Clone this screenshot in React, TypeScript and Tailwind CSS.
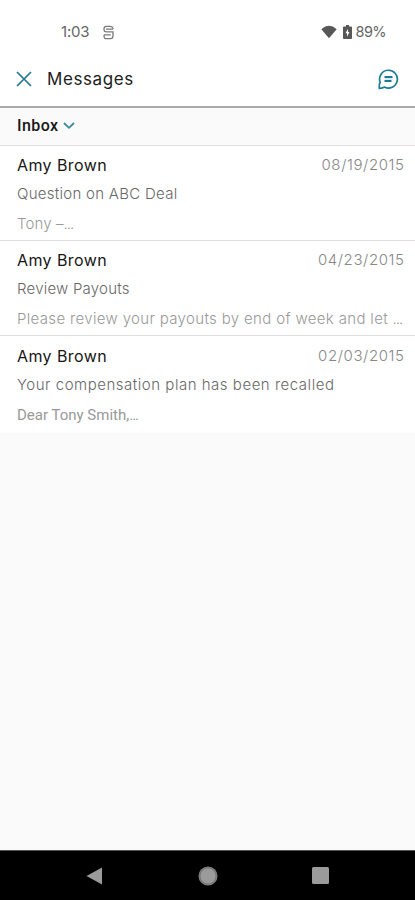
interface Message {
  sender: string;
  date: string;
  subject: string;
  subjectClass: string;
  preview: string;
  ending: string;
  previewClass: string;
}

const MESSAGES: Message[] = [
  {
    sender: 'Amy Brown',
    date: '08/19/2015',
    subject: 'Question on ABC Deal',
    subjectClass: 'tracking-[0.28px]',
    preview: 'Tony –',
    ending: '...',
    previewClass: 'mt-[6px] font-light tracking-[0.1px]',
  },
  {
    sender: 'Amy Brown',
    date: '04/23/2015',
    subject: 'Review Payouts',
    subjectClass: 'tracking-[0.22px]',
    preview: 'Please review your payouts by end of week and let ',
    ending: '...',
    previewClass: 'mt-[6px] font-light tracking-[0.34px]',
  },
  {
    sender: 'Amy Brown',
    date: '02/03/2015',
    subject: 'Your compensation plan has been recalled',
    subjectClass: 'tracking-[0.52px]',
    preview: 'Dear Tony Smith,',
    ending: '...',
    previewClass: "mt-[6px] font-['Roboto',sans-serif] tracking-[0px]",
  },
];

function StatusBar() {
  return (
    <div className="flex h-14 items-center pt-2 pl-[61px] pr-[29px] text-[#666]">
      <span className="text-[15px] leading-5 tracking-[-0.2px]">1:03</span>
      <svg className="ml-[14px]" width="11" height="15" viewBox="0 0 11 15" fill="none" stroke="#7a7a7a" strokeWidth="1.3">
        <path d="M10 4V3.5Q9.5 1.3 7.5 1.3H3.5Q1 1.3 1 4V4.5Q1 6.8 3.5 6.8H10V10.8Q10 13.7 7.5 13.7H3.5Q1 13.7 1 10.8V10" />
        <path d="M3 4.2H10M1 9.8H7.8" />
      </svg>
      <svg className="ml-auto" width="16" height="14" viewBox="0 0 16 14" fill="#575757">
        <path d="M0.3 4.2Q8 -2.7 15.7 4.2L8 13.2Z" />
      </svg>
      <svg className="ml-[6px]" width="9" height="14" viewBox="0 0 9 14" fill="#575757">
        <path d="M3 0H6V1.5H8Q9 1.5 9 2.5V13Q9 14 8 14H1Q0 14 0 13V2.5Q0 1.5 1 1.5H3Z" />
        <path d="M5 3.7L2.5 8.3H4V11.8L6.5 7.1H5Z" fill="#fff" />
      </svg>
      <span className="ml-1 text-[14.5px] leading-5 tracking-[-0.6px]">89%</span>
    </div>
  );
}

function Header() {
  return (
    <header className="flex h-[52px] items-center border-b-2 border-[#aaaaaa] pb-[4px] pl-4 pr-4">
      <svg width="16" height="16" viewBox="0 0 16 16" fill="none" stroke="#24788f" strokeWidth="1.7">
        <path d="M1 1L15 15M15 1L1 15" />
      </svg>
      <h1 className="ml-[15px] text-[17px] leading-6 tracking-[0.6px] text-[#202020]">Messages</h1>
      <svg className="ml-auto" width="21" height="21" viewBox="0 0 21 21" fill="none" stroke="#197c94">
        <path d="M1.3 19.5V15.5L2.2 13.4A8.9 8.9 0 1 1 6.3 18L4.5 18.9Z" strokeWidth="1.7" strokeLinejoin="round" />
        <path d="M6.5 8H14.5M6.5 12H13.5" strokeWidth="1.8" />
        <path d="M6.5 10H14.5" strokeWidth="0.6" opacity="0.5" />
      </svg>
    </header>
  );
}

function MessageRow({ message }: { message: Message }) {
  return (
    <li className="h-[95px] border-b border-[#dedede] bg-white pl-[17px] pr-[11px] pt-[7px] last:h-[97px] last:border-b-0 last:pt-2">
      <div className="flex items-center justify-between leading-6">
        <span className="text-[16px] tracking-[0.4px] text-[#161616]">{message.sender}</span>
        <span className="-mr-[0.6px] text-[15px] font-light tracking-[0.6px] text-[#888]">{message.date}</span>
      </div>
      <div className={`mt-[5px] text-[15px] font-light leading-6 text-[#686868] ${message.subjectClass}`}>
        {message.subject}
      </div>
      <div className={`whitespace-pre text-[15px] leading-6 text-[#999] ${message.previewClass}`}>
        {message.preview}
        <span className="tracking-[-1px]">{message.ending}</span>
      </div>
    </li>
  );
}

function NavigationBar() {
  return (
    <nav className="flex h-[50px] shrink-0 items-center border-t border-[#555] bg-black pl-[86px] text-[#9b9b9b]">
      <svg width="17" height="18" viewBox="0 0 17 18" fill="currentColor">
        <path d="M0.5 9L16 0.5V17.5Z" />
      </svg>
      <svg className="ml-[95px]" width="20" height="20" viewBox="0 0 20 20" fill="currentColor">
        <circle cx="10" cy="10" r="9.5" fill="#858585" />
        <circle cx="10" cy="10" r="8" stroke="#666" strokeWidth="0.7" />
      </svg>
      <div className="ml-[94px] size-[17px] rounded-[1.5px] bg-[#9b9b9b]" />
    </nav>
  );
}

export default function App() {
  return (
    <div className="flex h-[900px] w-[415px] flex-col overflow-hidden bg-[#fafafa] font-['Inter',sans-serif]">
      <div className="bg-white">
        <StatusBar />
        <Header />
      </div>
      <button className="flex h-[38px] shrink-0 items-center border-b border-[#dedede] bg-[#fafafa] pb-[2px] pl-[17px] text-left">
        <span className="font-['Roboto',sans-serif] text-[16px] font-medium leading-5 tracking-[0.4px] text-[#171717]">Inbox</span>
        <svg className="ml-[5px]" width="12" height="8" viewBox="0 0 12 8" fill="none" stroke="#3c899b" strokeWidth="1.8">
          <path d="M1 1L6 5.8L11 1" />
        </svg>
      </button>
      <ul className="flex-1">
        {MESSAGES.map((message) => (
          <MessageRow key={message.date} message={message} />
        ))}
      </ul>
      <NavigationBar />
    </div>
  );
}
